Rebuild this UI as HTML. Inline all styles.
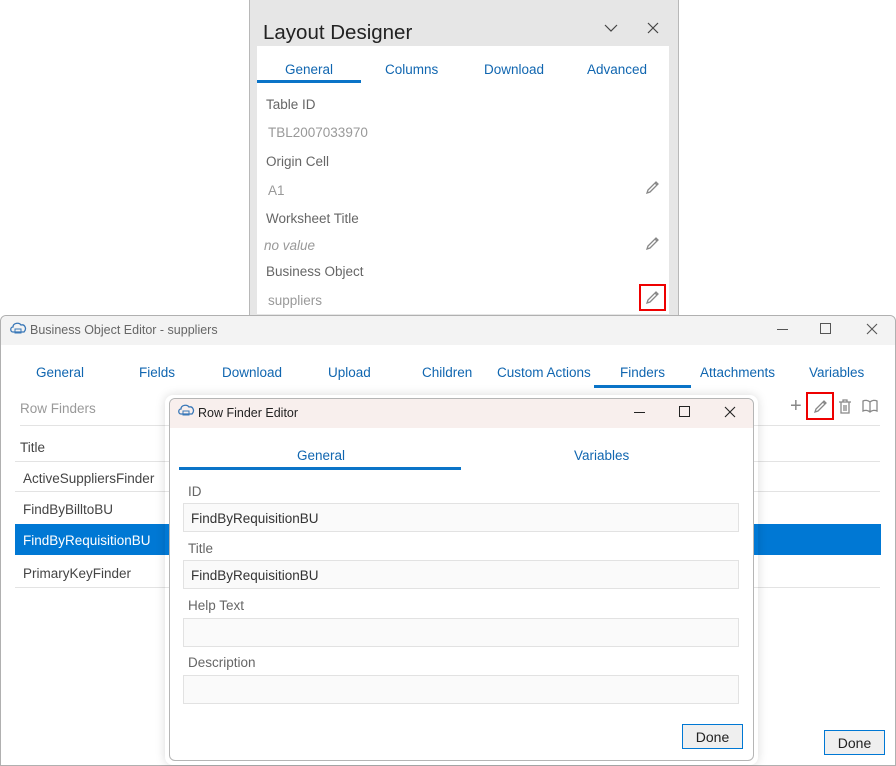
<!DOCTYPE html>
<html><head><meta charset="utf-8"><style>
*{margin:0;padding:0;box-sizing:border-box}
body{width:896px;height:766px;background:#fff;position:relative;overflow:hidden;font-family:"Liberation Sans",sans-serif;font-size:13.5px;color:#333}
.a{position:absolute;white-space:nowrap}
.blue{color:#1066b0}
.gray{color:#999}
.lab{color:#666}
.inp{position:absolute;background:#fafafa;border:1px solid #e2e2e2;padding-left:7px;line-height:30px;color:#333}
.btn{position:absolute;background:#efefef;border:1.5px solid #0078d4;text-align:center;color:#222;font-size:14px}
.hl{position:absolute;height:1px;background:#e3e3e3}
</style></head><body>

<div class="a" style="left:249px;top:0;width:430px;height:316px;background:#e6e6e6;border-left:1px solid #b8b8b8;border-right:1px solid #b8b8b8"></div>
<div class="a" style="left:263px;top:21px;font-size:20.5px;color:#222">Layout Designer</div>
<svg class="a" style="left:604px;top:23px" width="14" height="10"><path d="M1 2 L7 8 L13 2" fill="none" stroke="#444" stroke-width="1.2"/></svg>
<svg class="a" style="left:647px;top:22px" width="12" height="12"><path d="M1 1 L11 11 M11 1 L1 11" fill="none" stroke="#444" stroke-width="1.2"/></svg>
<div class="a" style="left:257px;top:46px;width:412px;height:268px;background:#fff"></div>
<div class="a blue" style="left:285px;top:62px">General</div>
<div class="a blue" style="left:385px;top:62px">Columns</div>
<div class="a blue" style="left:484px;top:62px">Download</div>
<div class="a blue" style="left:587px;top:62px">Advanced</div>
<div class="a" style="left:257px;top:80px;width:104px;height:3px;background:#0a74c8"></div>
<div class="a lab" style="left:266px;top:97px">Table ID</div>
<div class="a gray" style="left:268px;top:125px">TBL2007033970</div>
<div class="a lab" style="left:266px;top:154px">Origin Cell</div>
<div class="a gray" style="left:268px;top:183px">A1</div>
<div class="a lab" style="left:266px;top:211px">Worksheet Title</div>
<div class="a gray" style="left:264px;top:238px;font-style:italic">no value</div>
<div class="a lab" style="left:266px;top:264px">Business Object</div>
<div class="a gray" style="left:268px;top:293px">suppliers</div>
<svg class="a" style="left:645px;top:180px" width="15" height="15"><path d="M2 13 L3 10 L11 2 L13 4 L5 12 Z M10 3 L12 5" fill="none" stroke="#888" stroke-width="1.3"/></svg>
<svg class="a" style="left:645px;top:236px" width="15" height="15"><path d="M2 13 L3 10 L11 2 L13 4 L5 12 Z M10 3 L12 5" fill="none" stroke="#888" stroke-width="1.3"/></svg>
<svg class="a" style="left:645px;top:290px" width="15" height="15"><path d="M2 13 L3 10 L11 2 L13 4 L5 12 Z M10 3 L12 5" fill="none" stroke="#888" stroke-width="1.3"/></svg>
<div class="a" style="left:639px;top:284px;width:27px;height:27px;border:2px solid #e00"></div>

<div class="a" style="left:0;top:315px;width:896px;height:451px;background:#fff;border:1px solid #b0b0b0;border-radius:6px 6px 0 0"></div>
<div class="a" style="left:1px;top:316px;width:894px;height:29px;background:#f3f3f3;border-radius:6px 6px 0 0"></div>
<svg class="a" style="left:9px;top:321px" width="18" height="15"><path d="M4 11 C1 11 1 6 4 6 C4 2 10 1 12 4 C16 3 18 8 15 11 Z" fill="none" stroke="#3a78b8" stroke-width="1.3"/><rect x="6" y="8" width="6" height="4" fill="none" stroke="#3a78b8"/></svg>
<div class="a" style="left:30px;top:323px;font-size:12.5px;color:#666">Business Object Editor - suppliers</div>
<div class="a" style="left:777px;top:329px;width:11px;height:1px;background:#555"></div>
<div class="a" style="left:820px;top:323px;width:11px;height:11px;border:1px solid #555"></div>
<svg class="a" style="left:866px;top:323px" width="12" height="12"><path d="M1 1 L11 11 M11 1 L1 11" stroke="#555" stroke-width="1.1"/></svg>
<div class="a blue" style="left:36px;top:365px">General</div>
<div class="a blue" style="left:139px;top:365px">Fields</div>
<div class="a blue" style="left:222px;top:365px">Download</div>
<div class="a blue" style="left:328px;top:365px">Upload</div>
<div class="a blue" style="left:422px;top:365px">Children</div>
<div class="a blue" style="left:497px;top:365px">Custom Actions</div>
<div class="a blue" style="left:620px;top:365px">Finders</div>
<div class="a blue" style="left:700px;top:365px">Attachments</div>
<div class="a blue" style="left:809px;top:365px">Variables</div>
<div class="a" style="left:594px;top:385px;width:97px;height:3px;background:#0a74c8"></div>
<div class="a gray" style="left:20px;top:401px">Row Finders</div>
<div class="a" style="left:790px;top:397px;font-size:20px;color:#888;line-height:18px">+</div>
<svg class="a" style="left:813px;top:399px" width="15" height="15"><path d="M2 13 L3 10 L11 2 L13 4 L5 12 Z M10 3 L12 5" fill="none" stroke="#888" stroke-width="1.3"/></svg>
<div class="a" style="left:806px;top:392px;width:28px;height:28px;border:2px solid #e00"></div>
<svg class="a" style="left:838px;top:399px" width="14" height="15"><path d="M1 3 H13 M5 3 V1 H9 V3 M3 3 V14 H11 V3 M6 6 V12 M8 6 V12" fill="none" stroke="#888" stroke-width="1.3"/></svg>
<svg class="a" style="left:862px;top:399px" width="16" height="14"><path d="M8 3 V13 M8 3 C6 1 3 1 1 2 V12 C3 11 6 11 8 13 C10 11 13 11 15 12 V2 C13 1 10 1 8 3" fill="none" stroke="#888" stroke-width="1.3"/></svg>
<div class="hl" style="left:20px;top:425px;width:860px"></div>
<div class="a" style="left:20px;top:440px;color:#444">Title</div>
<div class="hl" style="left:15px;top:461px;width:865px"></div>
<div class="a" style="left:23px;top:471px;color:#444">ActiveSuppliersFinder</div>
<div class="hl" style="left:15px;top:491px;width:865px"></div>
<div class="a" style="left:23px;top:502px;color:#444">FindByBilltoBU</div>
<div class="a" style="left:15px;top:524px;width:866px;height:31px;background:#0078d4"></div>
<div class="a" style="left:23px;top:533px;color:#fff">FindByRequisitionBU</div>
<div class="a" style="left:23px;top:566px;color:#444">PrimaryKeyFinder</div>
<div class="hl" style="left:15px;top:587px;width:865px"></div>
<div class="btn" style="left:824px;top:730px;width:61px;height:25px;line-height:24px">Done</div>

<div class="a" style="left:165px;top:395px;width:593px;height:370px;box-shadow:0 0 10px rgba(0,0,0,0.15);border-radius:8px"></div>
<div class="a" style="left:169px;top:398px;width:585px;height:363px;background:#fff;border:1px solid #b5b5b5;border-radius:6px"></div>
<div class="a" style="left:170px;top:399px;width:583px;height:29px;background:#f8efed;border-radius:6px 6px 0 0"></div>
<svg class="a" style="left:177px;top:403px" width="18" height="15"><path d="M4 11 C1 11 1 6 4 6 C4 2 10 1 12 4 C16 3 18 8 15 11 Z" fill="none" stroke="#3a78b8" stroke-width="1.3"/><rect x="6" y="8" width="6" height="4" fill="none" stroke="#3a78b8"/></svg>
<div class="a" style="left:198px;top:406px;font-size:12.5px;color:#222">Row Finder Editor</div>
<div class="a" style="left:634px;top:412px;width:11px;height:1px;background:#222"></div>
<div class="a" style="left:679px;top:406px;width:11px;height:11px;border:1.2px solid #222"></div>
<svg class="a" style="left:724px;top:406px" width="12" height="12"><path d="M1 1 L11 11 M11 1 L1 11" stroke="#222" stroke-width="1.1"/></svg>
<div class="a blue" style="left:297px;top:448px">General</div>
<div class="a blue" style="left:574px;top:448px">Variables</div>
<div class="a" style="left:179px;top:467px;width:282px;height:3px;background:#0a74c8"></div>
<div class="a lab" style="left:188px;top:484px">ID</div>
<div class="inp" style="left:183px;top:503px;width:556px;height:29px">FindByRequisitionBU</div>
<div class="a lab" style="left:188px;top:541px">Title</div>
<div class="inp" style="left:183px;top:560px;width:556px;height:29px">FindByRequisitionBU</div>
<div class="a lab" style="left:188px;top:598px">Help Text</div>
<div class="inp" style="left:183px;top:618px;width:556px;height:29px"></div>
<div class="a lab" style="left:188px;top:655px">Description</div>
<div class="inp" style="left:183px;top:675px;width:556px;height:29px"></div>
<div class="btn" style="left:682px;top:724px;width:61px;height:25px;line-height:24px">Done</div>
</body></html>
